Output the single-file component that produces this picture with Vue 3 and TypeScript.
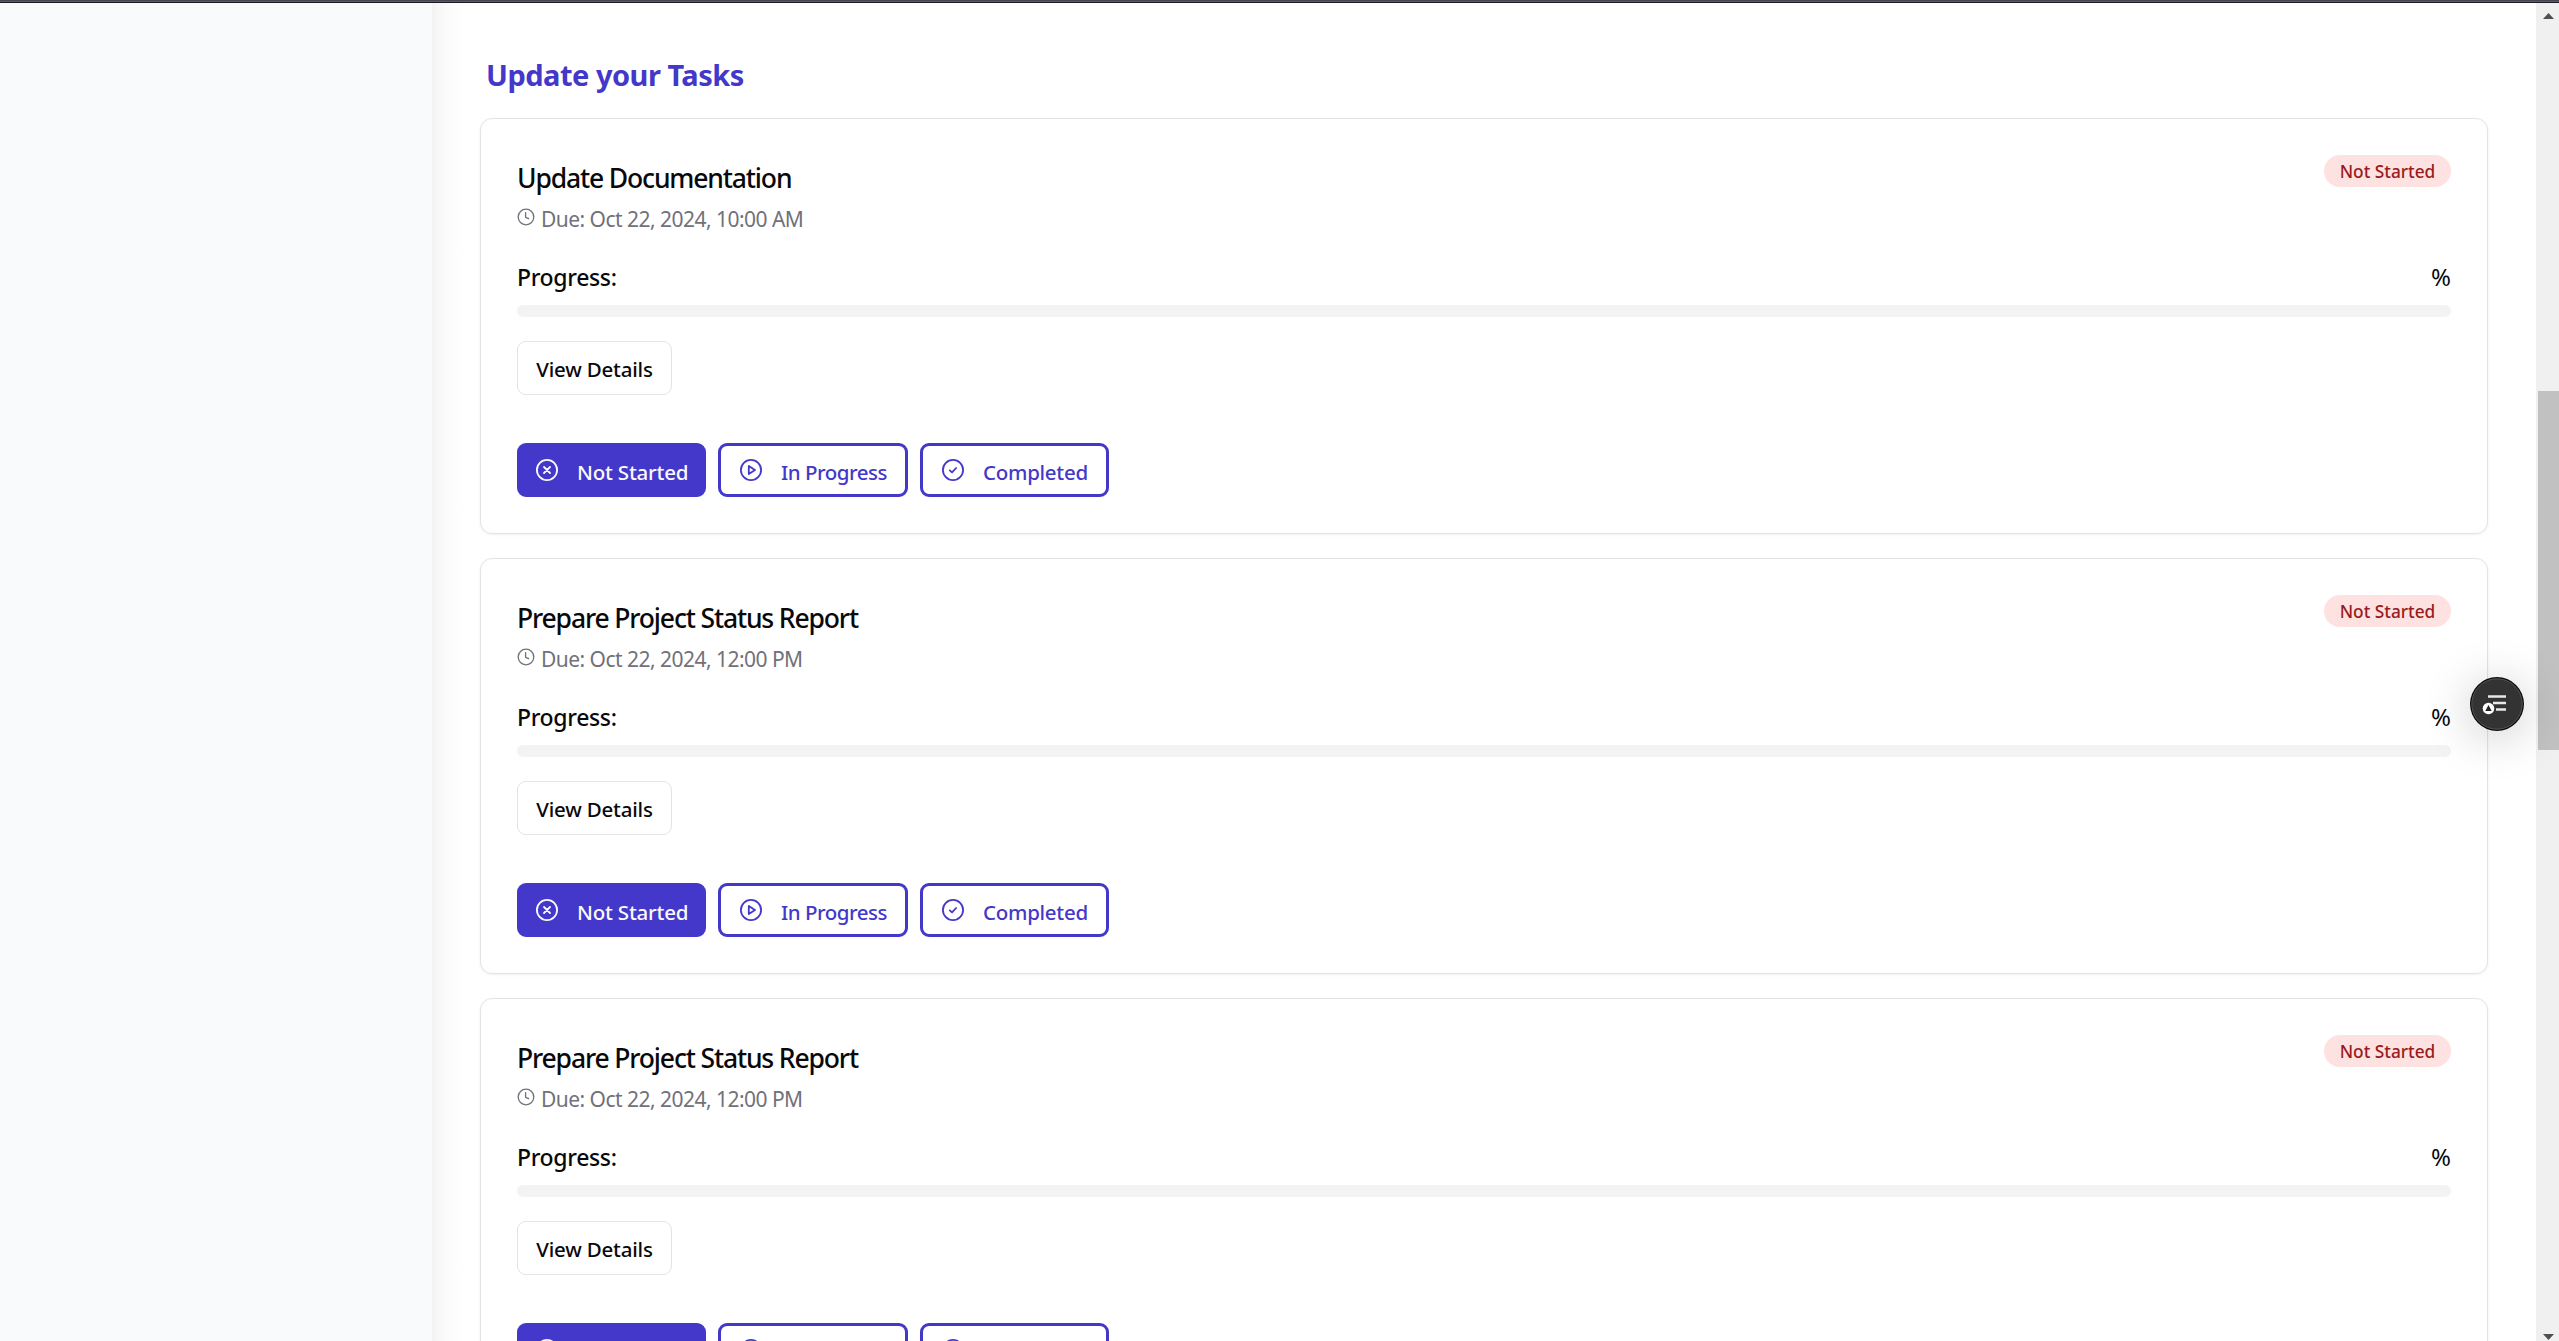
<script setup lang="ts">
interface Task {
  title: string
  due: string
}

const tasks: Task[] = [
  { title: 'Update Documentation', due: 'Oct 22, 2024, 10:00 AM' },
  { title: 'Prepare Project Status Report', due: 'Oct 22, 2024, 12:00 PM' },
  { title: 'Prepare Project Status Report', due: 'Oct 22, 2024, 12:00 PM' },
]
</script>

<template>
  <div class="page">
    <div class="topline"></div>
    <div class="body">
      <aside class="sidebar"></aside>
      <main class="main">
        <h2 class="heading">Update your Tasks</h2>
        <section v-for="(task, i) in tasks" :key="i" class="card">
          <div class="card-head">
            <div>
              <h3 class="title">{{ task.title }}</h3>
              <p class="due">
                <svg width="18" height="18" viewBox="0 0 18 18" fill="none" stroke="currentColor" stroke-width="1.3" stroke-linecap="round" stroke-linejoin="round">
                  <circle cx="9" cy="9" r="7.8" />
                  <path d="M8.6 4.6v4.8l3 1.3" />
                </svg>
                <span>Due: {{ task.due }}</span>
              </p>
            </div>
            <span class="badge">Not Started</span>
          </div>
          <div class="progress-row">
            <span class="progress-label">Progress:</span>
            <span class="percent">%</span>
          </div>
          <div class="track"></div>
          <button class="details"><span>View Details</span></button>
          <div class="actions">
            <button class="action active">
              <svg width="24" height="24" viewBox="0 0 24 24" fill="none" stroke="currentColor" stroke-width="1.8" stroke-linecap="round">
                <circle cx="12" cy="12" r="10.1" />
                <path d="M9 9l6 6M15 9l-6 6" />
              </svg>
              <span>Not Started</span>
            </button>
            <button class="action in-progress">
              <svg width="24" height="24" viewBox="0 0 24 24" fill="none" stroke="currentColor" stroke-width="1.8" stroke-linejoin="round">
                <circle cx="12" cy="12" r="10.1" />
                <path d="M9.8 7.9v8.2l6.2-4.1z" />
              </svg>
              <span>In Progress</span>
            </button>
            <button class="action completed">
              <svg width="24" height="24" viewBox="0 0 24 24" fill="none" stroke="currentColor" stroke-width="1.8" stroke-linecap="round" stroke-linejoin="round">
                <circle cx="12" cy="12" r="10.1" />
                <path d="M8.8 12.4l2.2 2 4.1-4.4" />
              </svg>
              <span>Completed</span>
            </button>
          </div>
        </section>
      </main>
      <div class="scrollbar">
        <svg class="arrow" width="11" height="6" viewBox="0 0 11 6"><path d="M5.5 0L11 6H0z" fill="#505050" /></svg>
        <div class="thumb"></div>
        <svg class="arrow" width="11" height="6" viewBox="0 0 11 6"><path d="M0 0h11L5.5 6z" fill="#505050" /></svg>
      </div>
    </div>
    <div class="fab">
      <svg width="54" height="54" viewBox="0 0 54 54">
        <circle cx="27" cy="27" r="27" fill="#0c0c0c" />
        <circle cx="27" cy="27" r="25.2" fill="#333" stroke="#555" stroke-width="1" />
        <path d="M18 19.5h18M23 26h13M26 32.5h10" stroke="#e8e8e8" stroke-width="2.4" />
        <circle cx="18.5" cy="31.5" r="5.8" fill="#fff" />
        <path d="M18.5 28l3.2 6h-6.4z" fill="#222" />
      </svg>
    </div>
  </div>
</template>

<style>
html,
body {
  margin: 0;
  overflow: hidden;
}
</style>

<style scoped>
.page {
  width: 2559px;
  height: 1341px;
  overflow: hidden;
  position: relative;
  display: flex;
  flex-direction: column;
  background: #fff;
  font-family: "Noto Sans", "Open Sans", sans-serif;
  color: #09090b;
}
.topline {
  height: 3px;
  flex: none;
  background: linear-gradient(#464653 0 1px, #5c5a68 1px 2px, #1a1922 2px 3px);
}
.body {
  flex: 1;
  min-height: 0;
  display: flex;
}
.sidebar {
  width: 432px;
  flex: none;
  background: #f9fafc;
}
.main {
  flex: 1;
  min-width: 0;
  padding: 49px 48px 0;
  overflow: hidden;
  background: linear-gradient(90deg, #f2f2f2, #f5f5f5 4px, #f8f8f8 8px, #fbfbfb 14px, #fdfdfd 21px, #fff 34px);
}
.heading {
  margin: 0 0 18px 6px;
  height: 48px;
  line-height: 45px;
  font-size: 29px;
  font-weight: 700;
  letter-spacing: -0.5px;
  color: #4338ca;
  white-space: nowrap;
}
.card {
  box-sizing: border-box;
  height: 416px;
  margin-bottom: 24px;
  padding: 36px;
  background: #fff;
  border: 1px solid #e4e4e7;
  border-radius: 12px;
  box-shadow: 0 1px 3px rgba(0, 0, 0, 0.06);
}
.card-head {
  display: flex;
  justify-content: space-between;
  align-items: flex-start;
  height: 84px;
  white-space: nowrap;
}
.title {
  margin: 4px 0 0;
  height: 38px;
  line-height: 38px;
  font-size: 26.5px;
  font-weight: 500;
  letter-spacing: -1.15px;
}
.due {
  margin: 7px 0 0;
  height: 30px;
  display: flex;
  align-items: center;
  gap: 6px;
  font-size: 21px;
  line-height: 30px;
  letter-spacing: -0.53px;
  color: #71717a;
}
.due svg {
  margin-top: -4px;
}
.badge {
  box-sizing: border-box;
  width: 127px;
  height: 32px;
  border-radius: 16px;
  background: #fee2e2;
  color: #991b1b;
  font-size: 17.3px;
  font-weight: 500;
  line-height: 33px;
  text-align: center;
}
.progress-row {
  height: 36px;
  margin-top: 20px;
  display: flex;
  justify-content: space-between;
  font-size: 23px;
  line-height: 36px;
  font-weight: 500;
}
.progress-label {
  letter-spacing: -0.35px;
}
.percent {
  font-size: 24px;
  font-weight: 400;
}
.track {
  height: 12px;
  margin-top: 10px;
  border-radius: 6px;
  background: #f3f3f3;
}
button {
  font-family: inherit;
  box-sizing: border-box;
  height: 54px;
  border-radius: 9px;
  padding: 0;
  font-size: 20.5px;
  font-weight: 500;
  letter-spacing: -0.2px;
  white-space: nowrap;
  background: #fff;
  display: flex;
  align-items: center;
}
.details {
  width: 155px;
  margin-top: 24px;
  border: 1px solid #e4e4e7;
  justify-content: center;
  color: #09090b;
}
.details span {
  padding-top: 2px;
}
.actions {
  display: flex;
  gap: 12px;
  margin-top: 48px;
}
.action {
  width: 190px;
  border: 3px solid #4338ca;
  color: #4338ca;
  padding-left: 18px;
}
.action svg {
  flex: none;
  margin-right: 18px;
}
.action span {
  padding-top: 3px;
}
.action.active {
  width: 189px;
  background: #4338ca;
  color: #fafafa;
  padding-left: 15px;
}
.action.in-progress {
  letter-spacing: -0.5px;
}
.action.completed {
  width: 189px;
  letter-spacing: -0.27px;
}
.scrollbar {
  box-sizing: border-box;
  width: 23px;
  flex: none;
  background: #f0f0f0;
  display: flex;
  flex-direction: column;
  padding: 10px 0 1px 2px;
}
.arrow {
  flex: none;
  margin-left: 5px;
}
.thumb {
  height: 359px;
  margin-top: 372px;
  margin-bottom: auto;
  background: #c1c1c1;
}
.fab {
  position: absolute;
  left: 2470px;
  top: 677px;
  width: 54px;
  height: 54px;
  border-radius: 50%;
  box-shadow: 0 6px 48px rgba(0, 0, 0, 0.22);
}
.fab svg {
  display: block;
}
</style>
